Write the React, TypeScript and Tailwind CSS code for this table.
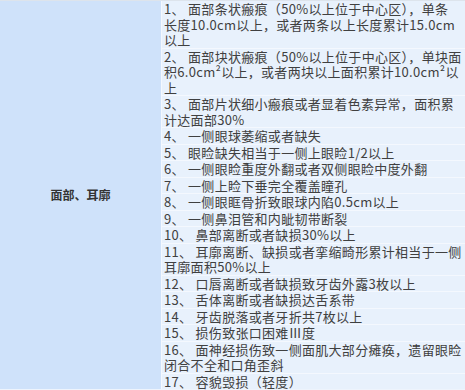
import React from 'react';

const items: React.ReactNode[] = [
  <>
    1、 面部条状瘢痕（50%以上位于中心区），单条<span className="whitespace-nowrap">长度</span>10.0cm以上，或者两条以上长度累计15.0cm以上
  </>,
  '2、 面部块状瘢痕（50%以上位于中心区），单块面积6.0cm²以上，或者两块以上面积累计10.0cm²以上',
  '3、 面部片状细小瘢痕或者显着色素异常，面积累计达面部30%',
  '4、 一侧眼球萎缩或者缺失',
  '5、 眼睑缺失相当于一侧上眼睑1/2以上',
  '6、 一侧眼睑重度外翻或者双侧眼睑中度外翻',
  '7、 一侧上睑下垂完全覆盖瞳孔',
  '8、 一侧眼眶骨折致眼球内陷0.5cm以上',
  '9、 一侧鼻泪管和内眦韧带断裂',
  '10、 鼻部离断或者缺损30%以上',
  '11、 耳廓离断、缺损或者挛缩畸形累计相当于一侧耳廓面积50%以上',
  '12、 口唇离断或者缺损致牙齿外露3枚以上',
  '13、 舌体离断或者缺损达舌系带',
  '14、 牙齿脱落或者牙折共7枚以上',
  '15、 损伤致张口困难Ⅲ度',
  '16、 面神经损伤致一侧面肌大部分瘫痪，遗留眼睑闭合不全和口角歪斜',
  '17、 容貌毁损（轻度）',
];

const App: React.FC = () => {
  return (
    <div
      className="w-[465px] h-[390px] overflow-hidden bg-[#eef4fc] border-t border-[#dde4ec] text-[#404040] text-[13px] tracking-[0.3px]"
      style={{ fontFamily: '"Noto Sans CJK SC", "Noto Sans", sans-serif' }}
    >
      <div className="flex gap-px bg-[#f4f8fe]">
        <div className="w-[161px] shrink-0 bg-[#cfe2fa] flex items-center justify-center font-bold text-[12px] tracking-normal text-[#333]">
          面部、耳廓
        </div>
        <div className="flex-1 flex flex-col gap-px">
          {items.map((t, i) => (
            <div key={i} className="bg-[#e8f1fc] pl-[2px] leading-[15.5px]">
              {t}
            </div>
          ))}
        </div>
      </div>
    </div>
  );
};

export default App;
